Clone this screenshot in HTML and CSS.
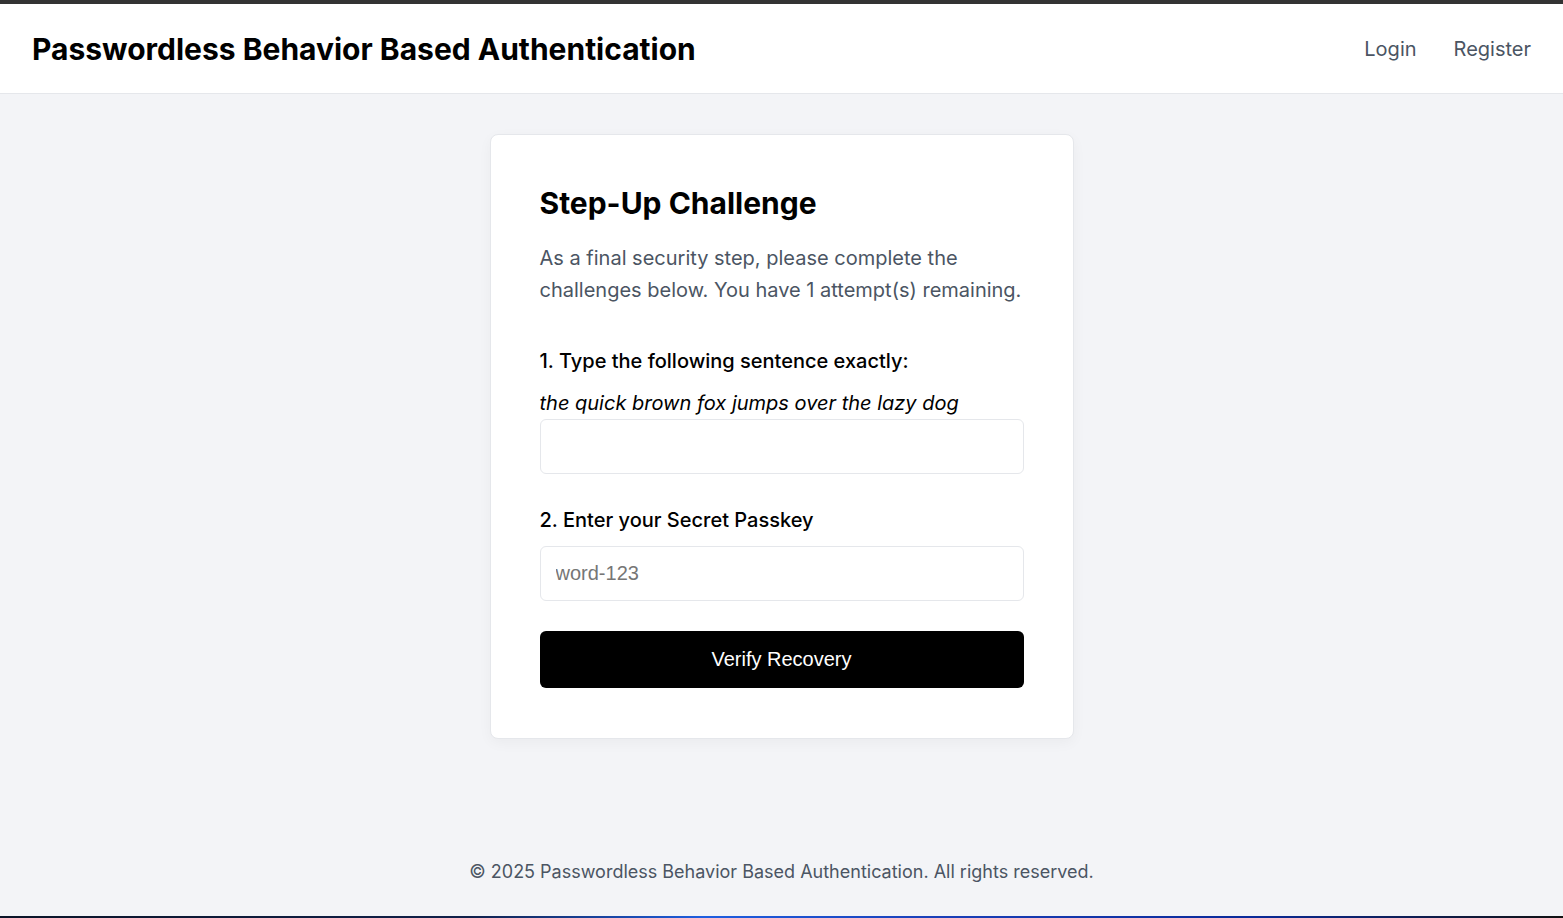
FILE: index.html
```html
<!DOCTYPE html>
<html lang="en">
<head>
<meta charset="utf-8">
<title>Step-Up Challenge</title>
<link rel="stylesheet" href="styles.css">
</head>
<body>
<div class="topbar"></div>
<header class="header">
  <h1 class="brand">Passwordless Behavior Based Authentication</h1>
  <nav class="nav">
    <a href="#" class="nav-link">Login</a>
    <a href="#" class="nav-link">Register</a>
  </nav>
</header>
<main class="main">
  <section class="card">
    <h2 class="card-title">Step-Up Challenge</h2>
    <p class="card-desc">As a final security step, please complete the challenges below. You have 1 attempt(s) remaining.</p>
    <form class="form">
      <div class="field">
        <label class="label">1. Type the following sentence exactly:</label>
        <p class="sentence">the quick brown fox jumps over the lazy dog</p>
        <input class="input input-first" type="text">
      </div>
      <div class="field field-second">
        <label class="label">2. Enter your Secret Passkey</label>
        <input class="input input-spaced" type="text" placeholder="word-123">
      </div>
      <button type="button" class="btn">Verify Recovery</button>
    </form>
  </section>
</main>
<footer class="footer">© 2025 Passwordless Behavior Based Authentication. All rights reserved.</footer>
<div class="bottombar"></div>
</body>
</html>
```
FILE: styles.css
```css
* { box-sizing: border-box; }
html, body { margin: 0; padding: 0; }
body {
  height: 918px;
  display: flex;
  flex-direction: column;
  background: #f3f4f7;
  font-family: Inter, "Noto Sans", sans-serif;
  color: #000;
}
.topbar { height: 4px; background: #333333; flex: none; }
.header {
  flex: none;
  height: 90px;
  background: #fff;
  border-bottom: 1px solid #e5e7eb;
  display: flex;
  align-items: center;
  justify-content: space-between;
  padding: 0 32px;
}
.brand { margin: 0; font-size: 30px; font-weight: 700; }
.nav { display: flex; gap: 37px; }
.nav-link { color: #4b5563; text-decoration: none; font-size: 20px; }
.main {
  flex: 1;
  display: flex;
  justify-content: center;
  align-items: flex-start;
  padding-top: 40px;
}
.card {
  width: 584px;
  background: #fff;
  border: 1px solid #e5e7eb;
  border-radius: 8px;
  box-shadow: 0 4px 14px rgba(0,0,0,0.04);
  padding: 50px 49px 50px;
}
.card-title { margin: 0; font-size: 30px; font-weight: 700; line-height: 36px; }
.card-desc { margin: 21px 0 0; font-size: 20px; line-height: 32px; color: #4b5563; }
.form { margin-top: 40px; }
.field { display: flex; flex-direction: column; }
.field-second { margin-top: 31px; }
.label { font-size: 20px; font-weight: 500; line-height: 30px; }
.sentence { margin: 13px 0 0; font-style: italic; font-size: 20px; line-height: 28px; }
.input {
  height: 55px;
  border: 1px solid #e5e7eb;
  border-radius: 6px;
  padding: 0 15px;
  font-family: "Liberation Sans", Arial, sans-serif;
  font-size: 20px;
  background: #fff;
  margin: 0;
}
.input-first { margin-top: 2px; }
.input-spaced { margin-top: 11px; }
.input::placeholder { color: #767676; }
.btn {
  margin-top: 30px;
  width: 100%;
  height: 57px;
  border: none;
  border-radius: 6px;
  background: #000;
  color: #fff;
  font-family: "Liberation Sans", Arial, sans-serif;
  font-size: 20px;
}
.footer {
  flex: none;
  text-align: center;
  font-size: 18px;
  line-height: 28px;
  color: #4b5563;
  padding: 20px 0 30px;
}
.bottombar {
  flex: none;
  height: 2px;
  background: linear-gradient(90deg, #0b1428 0%, #10204a 30%, #1e5ee0 45%, #1a3fb8 60%, #0a2a9a 80%, #111 100%);
}
```
